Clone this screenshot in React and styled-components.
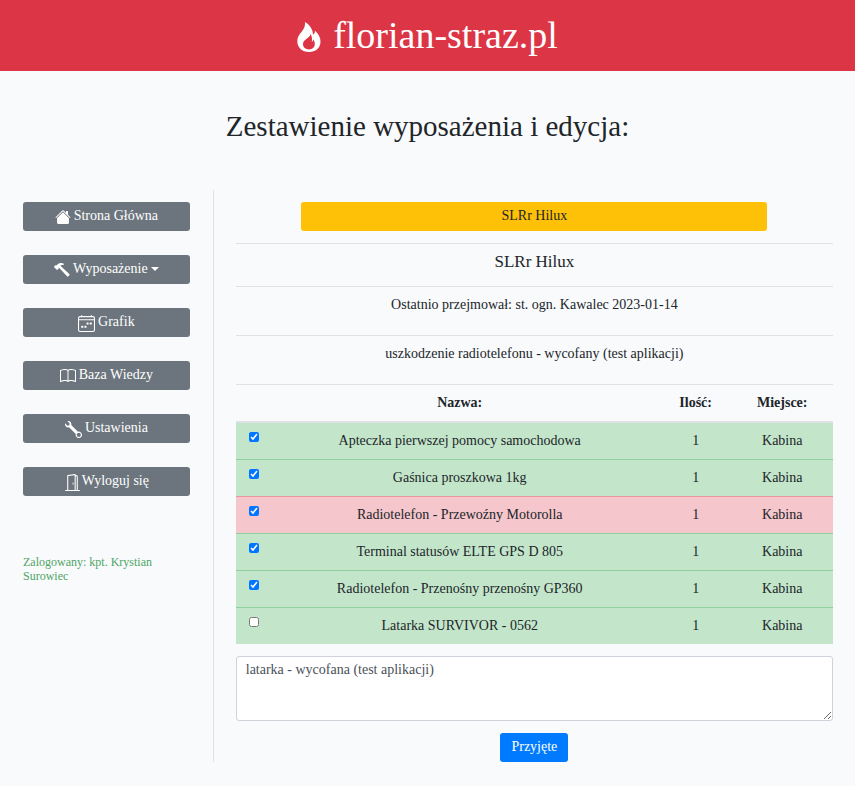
import React from "react";
import styled, { createGlobalStyle } from "styled-components";
import {
  BsHouseFill,
  BsHammer,
  BsCalendar4Week,
  BsBook,
  BsWrench,
  BsDoorOpen,
} from "react-icons/bs";

const GlobalStyle = createGlobalStyle`
  *, *::before, *::after { box-sizing: border-box; }
  body {
    margin: 0;
    background: #f8fafc;
    color: #212529;
    font-family: "Liberation Serif", serif;
    font-size: 14px;
    line-height: 20px;
  }
  button, textarea, input { font: inherit; }
`;

const Header = styled.header`
  display: flex;
  align-items: center;
  justify-content: center;
  gap: 12px;
  padding: 13px 16px 14px;
  background: #dc3545;
  color: #fff;
`;

const BrandIcon = styled.svg`
  width: 24px;
  height: 30px;
  margin-top: 4px;
  fill: currentColor;
`;

const Brand = styled.span`
  font-size: 38px;
  line-height: 44px;
`;

const PageTitle = styled.h1`
  margin: 0;
  padding: 40px 16px 48px;
  font-size: 29px;
  line-height: 31px;
  font-weight: 400;
  text-align: center;
`;

const Layout = styled.div`
  display: grid;
  grid-template-columns: minmax(0, 1fr) minmax(0, 3fr);
  padding-bottom: 24px;
`;

const Sidebar = styled.aside`
  padding: 12px 23px 0;
  border-right: 1px solid #dee2e6;
`;

const Menu = styled.nav`
  display: flex;
  flex-direction: column;
  gap: 24px;
`;

const MenuButton = styled.button`
  display: flex;
  align-items: center;
  justify-content: center;
  gap: ${(p) => p.$gap ?? 3}px;
  width: 100%;
  height: 29px;
  padding: 0 8px 1px;
  border: 0;
  border-radius: 3px;
  background: #6c757d;
  color: #fff;
  cursor: pointer;

  svg {
    width: ${(p) => p.$icon ?? 16}px;
    height: ${(p) => p.$icon ?? 16}px;
    margin-top: 2px;
  }
`;

const Caret = styled.span`
  border-top: 4px solid;
  border-left: 4px solid transparent;
  border-right: 4px solid transparent;
`;

const LoggedIn = styled.p`
  margin: 59px 0 0;
  color: #4fa564;
  font-size: 12px;
  line-height: 14px;
`;

const Content = styled.main`
  display: flex;
  flex-direction: column;
  align-items: center;
  padding: 12px 22px 0;
`;

const VehicleButton = styled.button`
  width: 78%;
  height: 29px;
  margin-bottom: 12px;
  padding: 0 8px 1px;
  border: 0;
  border-radius: 3px;
  background: #ffc107;
  color: #212529;
  cursor: pointer;
`;

const VehicleName = styled.h2`
  width: 100%;
  margin: 0;
  padding: 6px 12px 13px;
  border-top: 1px solid #dee2e6;
  font-size: 17px;
  line-height: 23px;
  font-weight: 400;
  text-align: center;
`;

const Note = styled.p`
  width: 100%;
  margin: 0;
  padding: 8px 12px 20px;
  border-top: 1px solid #dee2e6;
  text-align: center;
`;

const Table = styled.table`
  width: 100%;
  table-layout: fixed;
  border-collapse: separate;
  border-spacing: 0;
  text-align: center;
`;

const Column = styled.col`
  width: ${(p) => p.$width};
`;

const HeadCell = styled.th`
  height: 39px;
  padding: 0;
  border-top: 1px solid #dee2e6;
  border-bottom: 2px solid #dee2e6;
  font-weight: 700;
`;

const Row = styled.tr`
  --line: ${(p) => (p.$alert ? "#ed969e" : "#8fd19e")};
  background: ${(p) => (p.$alert ? "#f5c6cb" : "#c3e6cb")};

  &:not(:first-child) > td {
    height: 37px;
    border-top: 1px solid var(--line);
  }
`;

const Cell = styled.td`
  height: 36px;
  padding: 0;
`;

const CheckCell = styled(Cell)`
  padding: 9px 0 0 13px;
  text-align: left;
  vertical-align: top;
`;

const Check = styled.input`
  display: block;
  width: 10px;
  height: 10px;
  margin: 0;
`;

const Remarks = styled.textarea`
  display: block;
  width: 100%;
  height: 65px;
  margin: 12px 0;
  padding: 3px 9px;
  border: 1px solid #ced4da;
  border-radius: 3px;
  background: #fff;
  color: #495057;
  resize: vertical;
`;

const SubmitButton = styled.button`
  height: 29px;
  padding: 0 11px 1px;
  border: 0;
  border-radius: 3px;
  background: #007bff;
  color: #fff;
  cursor: pointer;
`;

const equipment = [
  { name: "Apteczka pierwszej pomocy samochodowa", checked: true },
  { name: "Gaśnica proszkowa 1kg", checked: true },
  { name: "Radiotelefon - Przewoźny Motorolla", checked: true, alert: true },
  { name: "Terminal statusów ELTE GPS D 805", checked: true },
  { name: "Radiotelefon - Przenośny przenośny GP360", checked: true },
  { name: "Latarka SURVIVOR - 0562", checked: false },
];

export default function App() {
  return (
    <>
      <GlobalStyle />
      <Header>
        <BrandIcon viewBox="0 0 24 30" aria-hidden="true">
          <path
            fillRule="evenodd"
            d="M8 0C12 2 16 7 16 12.5C17.5 12 18 10.5 17.8 8.5C21.5 11.5 23.5 15.5 23.5 19.5C23.5 26 18.5 30 12 30C5 30 .3 25.5 .3 19C.3 11 9 9 8 0ZM13.5 12C13.5 16 6 17 6 22C6 25.3 8.6 27.4 12 27.4C15.4 27.4 17.8 25.2 17.8 22C17.8 20 17 18.5 16.2 17.5C16 19 15.5 19.5 14.8 19.8C15.3 17 15 14 13.5 12Z"
          />
        </BrandIcon>
        <Brand>florian-straz.pl</Brand>
      </Header>
      <PageTitle>Zestawienie wyposażenia i edycja:</PageTitle>
      <Layout>
        <Sidebar>
          <Menu>
            <MenuButton type="button"><BsHouseFill />Strona Główna</MenuButton>
            <MenuButton type="button"><BsHammer />Wyposażenie<Caret /></MenuButton>
            <MenuButton type="button" $icon={17}><BsCalendar4Week />Grafik</MenuButton>
            <MenuButton type="button"><BsBook />Baza Wiedzy</MenuButton>
            <MenuButton type="button" $icon={17}><BsWrench />Ustawienia</MenuButton>
            <MenuButton type="button" $icon={17} $gap={1}><BsDoorOpen />Wyloguj się</MenuButton>
          </Menu>
          <LoggedIn>Zalogowany: kpt. Krystian Surowiec</LoggedIn>
        </Sidebar>
        <Content>
          <VehicleButton type="button">SLRr Hilux</VehicleButton>
          <VehicleName>SLRr Hilux</VehicleName>
          <Note>Ostatnio przejmował: st. ogn. Kawalec 2023-01-14</Note>
          <Note>uszkodzenie radiotelefonu - wycofany (test aplikacji)</Note>
          <Table>
            <colgroup>
              <Column $width="4%" />
              <Column />
              <Column $width="12%" />
              <Column $width="17%" />
            </colgroup>
            <thead>
              <tr>
                <HeadCell as="td" />
                <HeadCell scope="col">Nazwa:</HeadCell>
                <HeadCell scope="col">Ilość:</HeadCell>
                <HeadCell scope="col">Miejsce:</HeadCell>
              </tr>
            </thead>
            <tbody>
              {equipment.map((item, i) => (
                <Row key={item.name} $alert={item.alert}>
                  <CheckCell>
                    <Check type="checkbox" id={`item-${i}`} defaultChecked={item.checked} />
                  </CheckCell>
                  <Cell><label htmlFor={`item-${i}`}>{item.name}</label></Cell>
                  <Cell>1</Cell>
                  <Cell>Kabina</Cell>
                </Row>
              ))}
            </tbody>
          </Table>
          <Remarks aria-label="Uwagi" defaultValue="latarka - wycofana (test aplikacji)" />
          <SubmitButton type="button">Przyjęte</SubmitButton>
        </Content>
      </Layout>
    </>
  );
}
